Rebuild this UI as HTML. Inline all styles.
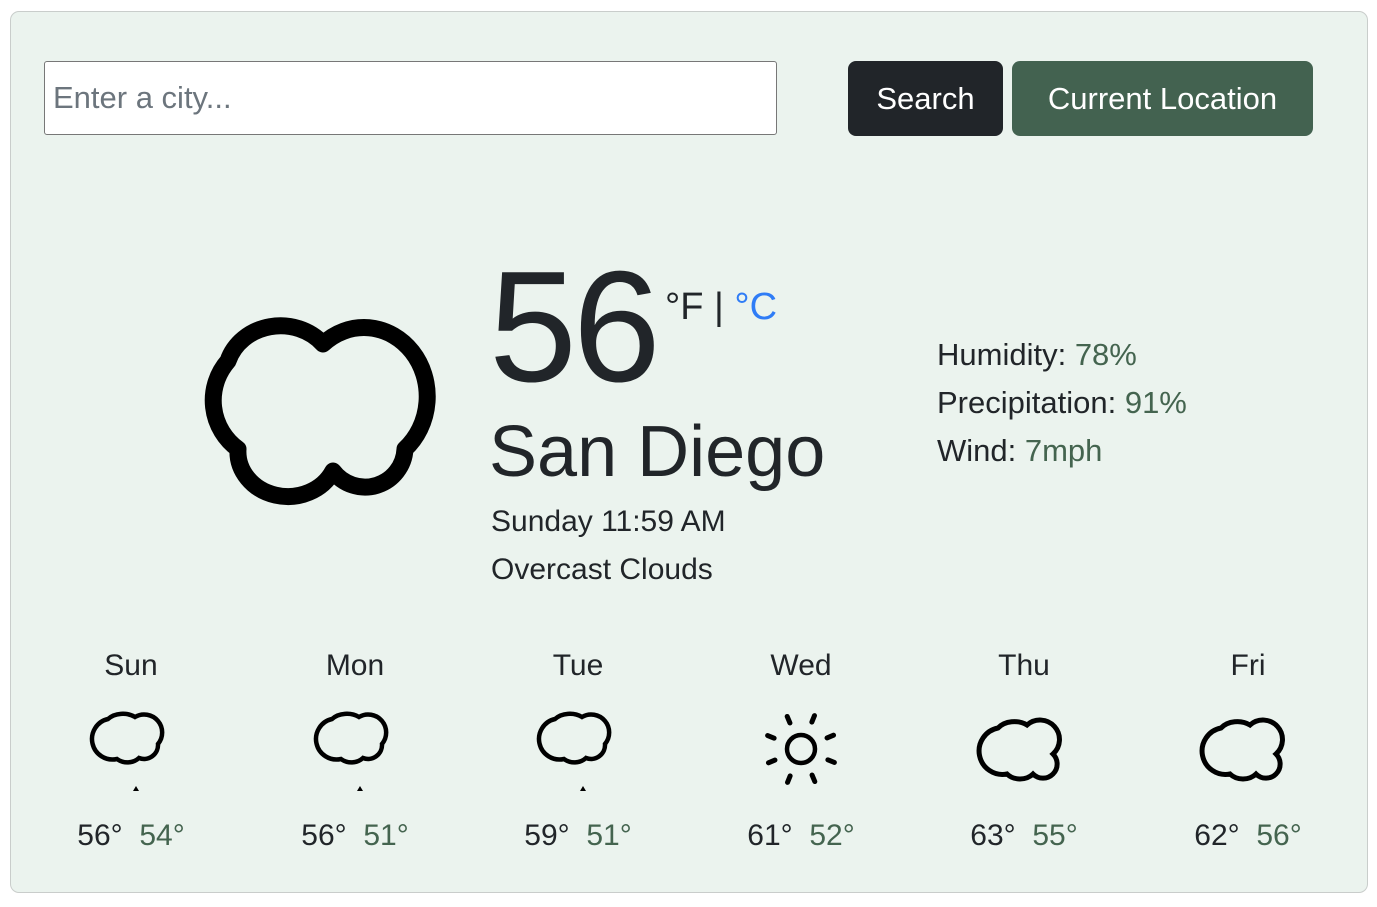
<!DOCTYPE html>
<html><head><style>
body{margin:0;background:#fff;font-family:"Liberation Sans",sans-serif;color:#212529}
.card{position:absolute;left:10px;top:11px;width:1356px;height:880px;border:1px solid #c9cdcb;border-radius:9px;background:#ebf3ee}
.abs{position:absolute;white-space:nowrap;overflow:visible}
input{position:absolute;left:33px;top:49px;width:733px;height:74px;box-sizing:border-box;border:1px solid #777;border-radius:3px;font-size:31px;padding:0 8px;font-family:"Liberation Sans",sans-serif;background:#fff}
input::placeholder{color:#6c757d}
.btn{position:absolute;top:49px;height:75px;border-radius:8px;color:#fff;font-size:31px;display:flex;align-items:center;justify-content:center}
.g{color:#44644f}
.day{position:absolute;width:200px;text-align:center;font-size:30px}
</style></head><body>
<div class="card">
<input placeholder="Enter a city...">
<div class="btn" style="left:837px;width:155px;background:#212529">Search</div>
<div class="btn" style="left:1001px;width:301px;background:#436250">Current Location</div>

<svg class="abs" style="left:172px;top:287px" width="260" height="215" viewBox="0 0 260 215">
<path d="M45 62 A55 50 0 0 1 140 45 A55 60 0 0 1 222 150 A40 40 0 0 1 150 172 A50 45 0 0 1 55 150 A60 60 0 0 1 45 62 Z" fill="none" stroke="#000" stroke-width="17" stroke-linejoin="round"/>
</svg>

<div class="abs" style="left:478px;top:236px;font-size:158px;letter-spacing:-4px;line-height:1">56</div>
<div class="abs" style="left:654px;top:274px;font-size:38px">°F | <span style="color:#2f7cf6">°C</span></div>
<div class="abs" style="left:478px;top:404px;font-size:72px;line-height:1">San Diego</div>
<div class="abs" style="left:480px;top:493px;font-size:30px">Sunday 11:59 AM</div>
<div class="abs" style="left:480px;top:541px;font-size:30px">Overcast Clouds</div>

<div class="abs" style="left:926px;top:319px;font-size:31px;line-height:48px">Humidity: <span class="g">78%</span><br>Precipitation: <span class="g">91%</span><br>Wind: <span class="g">7mph</span></div>

<div class="day" style="left:20px;top:637px">Sun</div>
<div class="day" style="left:244px;top:637px">Mon</div>
<div class="day" style="left:467px;top:637px">Tue</div>
<div class="day" style="left:690px;top:637px">Wed</div>
<div class="day" style="left:913px;top:637px">Thu</div>
<div class="day" style="left:1137px;top:637px">Fri</div>

<svg class="abs" style="left:80px;top:695px" width="80" height="90"><path d="M17 12 A19 14 0 0 1 44 10 A18 18 0 0 1 67 37 A14 14 0 0 1 48 51 A16 14 0 0 1 26 52 A20 20 0 0 1 17 12 Z" fill="none" stroke="#000" stroke-width="4.5"/><path d="M42 84 l3 -5 l3 5z"/></svg>
<svg class="abs" style="left:304px;top:695px" width="80" height="90"><path d="M17 12 A19 14 0 0 1 44 10 A18 18 0 0 1 67 37 A14 14 0 0 1 48 51 A16 14 0 0 1 26 52 A20 20 0 0 1 17 12 Z" fill="none" stroke="#000" stroke-width="4.5"/><path d="M42 84 l3 -5 l3 5z"/></svg>
<svg class="abs" style="left:527px;top:695px" width="80" height="90"><path d="M17 12 A19 14 0 0 1 44 10 A18 18 0 0 1 67 37 A14 14 0 0 1 48 51 A16 14 0 0 1 26 52 A20 20 0 0 1 17 12 Z" fill="none" stroke="#000" stroke-width="4.5"/><path d="M42 84 l3 -5 l3 5z"/></svg>
<svg class="abs" style="left:750px;top:697px" width="80" height="80" viewBox="0 0 80 80"><circle cx="40" cy="40" r="14" fill="none" stroke="#000" stroke-width="4.5"/><g stroke="#000" stroke-width="5" stroke-linecap="round"><path d="M40 4v7M40 69v7M4 40h7M69 40h7M15 15l5 5M60 60l5 5M15 65l5-5M60 20l5-5" transform="rotate(22 40 40)"/></g></svg>
<svg class="abs" style="left:970px;top:700px" width="84" height="75"><path d="M17 16 A20 15 0 0 1 46 13 A19 19 0 0 1 72 42 A14 14 0 0 1 52 62 A17 14 0 0 1 26 62 A22 22 0 0 1 17 16 Z" fill="none" stroke="#000" stroke-width="5"/></svg>
<svg class="abs" style="left:1193px;top:700px" width="84" height="75"><path d="M17 16 A20 15 0 0 1 46 13 A19 19 0 0 1 72 42 A14 14 0 0 1 52 62 A17 14 0 0 1 26 62 A22 22 0 0 1 17 16 Z" fill="none" stroke="#000" stroke-width="5"/></svg>

<div class="day" style="left:20px;top:807px">56° &nbsp;<span class="g">54°</span></div>
<div class="day" style="left:244px;top:807px">56° &nbsp;<span class="g">51°</span></div>
<div class="day" style="left:467px;top:807px">59° &nbsp;<span class="g">51°</span></div>
<div class="day" style="left:690px;top:807px">61° &nbsp;<span class="g">52°</span></div>
<div class="day" style="left:913px;top:807px">63° &nbsp;<span class="g">55°</span></div>
<div class="day" style="left:1137px;top:807px">62° &nbsp;<span class="g">56°</span></div>
</div>
</body></html>
